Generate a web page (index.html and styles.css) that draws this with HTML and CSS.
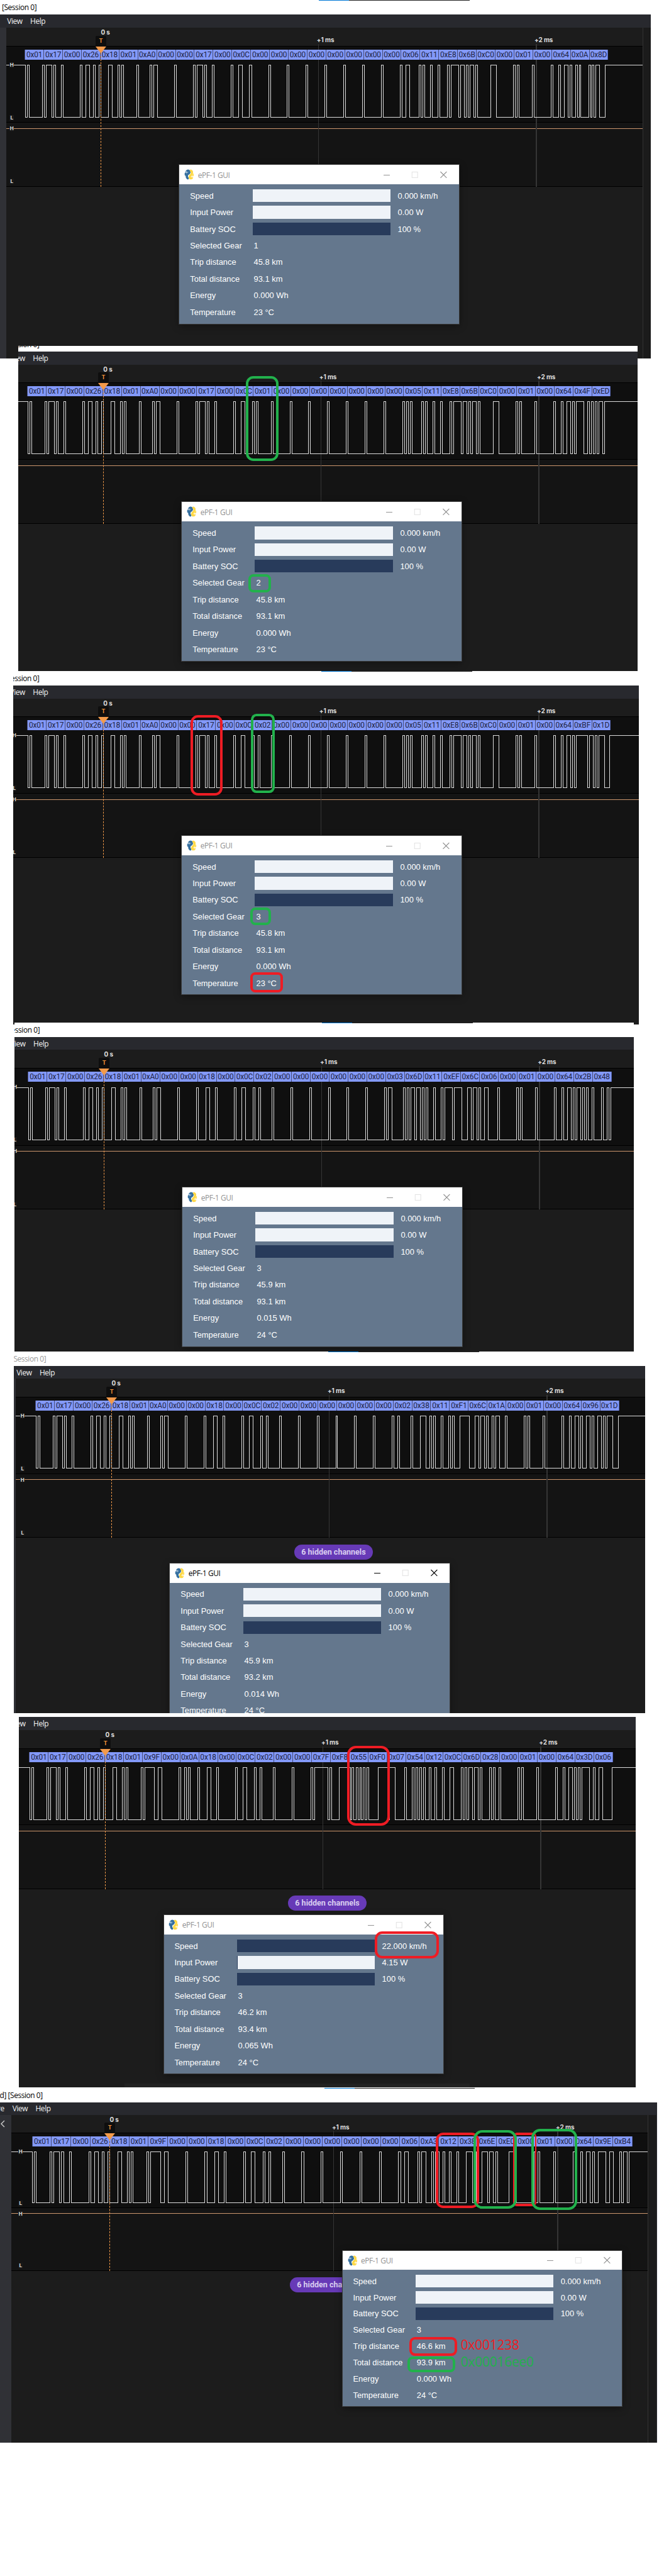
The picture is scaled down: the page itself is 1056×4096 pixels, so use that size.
FILE: index.html
```html
<!DOCTYPE html>
<html lang="en">
<head>
<meta charset="utf-8">
<title>ePF-1 serial captures</title>
<link rel="stylesheet" href="styles.css">
</head>
<body>
<svg class="defs" aria-hidden="true">
  <symbol id="python" viewBox="0 0 16 17">
    <path d="M4 3.6Q5.6 1.6 7.4 2.8Q9 4.4 7.4 6.6Q4.2 8 4.2 10.4Q3.8 13.4 5.6 14.6" fill="none" stroke="#3670a0" stroke-width="3.7" stroke-linecap="round"/>
    <path d="M2.2 6.8V9" stroke="#3670a0" stroke-width="3" stroke-linecap="round"/>
    <path d="M10.6 2.4Q13 3.4 12.2 6.4Q12.2 9 9.4 10.6Q8 13.6 9.6 14.6Q11.6 15 12.4 13.6" fill="none" stroke="#ffd845" stroke-width="3.5" stroke-linecap="round"/>
    <path d="M13.9 8V10" stroke="#ffe063" stroke-width="2.6" stroke-linecap="round"/>
    <circle cx="3.6" cy="4.2" r=".8" fill="#fff"/><circle cx="12.6" cy="13" r=".7" fill="#fff"/>
  </symbol>
  <symbol id="buttons" viewBox="0 0 102 12">
    <path d="M0 6.5H10" stroke="currentColor"/>
    <rect class="max" x="45.5" y="1.5" width="9" height="9" fill="none"/>
    <path d="M91 1L101 11M101 1L91 11" stroke="currentColor" stroke-width="1.1"/>
  </symbol>
</svg>
<main class="page">

<section class="capture c1">
  <div class="caption"><span>[Session 0]</span></div>
  <div class="app">
    <nav class="menubar"><span>View</span><span>Help</span></nav>
    <div class="body">
      <div class="strip"></div>
      <div class="scope">
        <div class="ruler"></div>
        <div class="digital" data-bytes="01 17 00 26 18 01 A0 00 00 17 00 0C 00 00 00 00 00 00 00 00 06 11 E8 6B C0 00 01 00 64 0A 8D"></div>
        <div class="analog"></div>
      </div>
      <div class="side"></div>
    </div>
    <div class="window">
      <header><svg class="logo"><use href="#python"/></svg>ePF-1 GUI<svg class="buttons"><use href="#buttons"/></svg></header>
      <div class="rows">
        <div class="row"><span>Speed</span><i class="bar"></i><b>0.000 km/h</b></div>
        <div class="row"><span>Input Power</span><i class="bar"></i><b>0.00 W</b></div>
        <div class="row"><span>Battery SOC</span><i class="bar full"></i><b>100 %</b></div>
        <div class="row"><span>Selected Gear</span><b>1</b></div>
        <div class="row"><span>Trip distance</span><b>45.8 km</b></div>
        <div class="row"><span>Total distance</span><b>93.1 km</b></div>
        <div class="row"><span>Energy</span><b>0.000 Wh</b></div>
        <div class="row"><span>Temperature</span><b>23 °C</b></div>
      </div>
    </div>
  </div>
</section>

<section class="capture c2">
  <div class="caption"><span>[Session 0]</span></div>
  <div class="app">
    <nav class="menubar"><span>View</span><span>Help</span></nav>
    <div class="body">
      <div class="scope">
        <div class="ruler"></div>
        <div class="digital" data-bytes="01 17 00 26 18 01 A0 00 00 17 00 0C 01 00 00 00 00 00 00 00 05 11 E8 6B C0 00 01 00 64 4F ED"></div>
        <div class="analog"></div>
      </div>
    </div>
    <div class="window">
      <header><svg class="logo"><use href="#python"/></svg>ePF-1 GUI<svg class="buttons"><use href="#buttons"/></svg></header>
      <div class="rows">
        <div class="row"><span>Speed</span><i class="bar"></i><b>0.000 km/h</b></div>
        <div class="row"><span>Input Power</span><i class="bar"></i><b>0.00 W</b></div>
        <div class="row"><span>Battery SOC</span><i class="bar full"></i><b>100 %</b></div>
        <div class="row"><span>Selected Gear</span><b>2</b></div>
        <div class="row"><span>Trip distance</span><b>45.8 km</b></div>
        <div class="row"><span>Total distance</span><b>93.1 km</b></div>
        <div class="row"><span>Energy</span><b>0.000 Wh</b></div>
        <div class="row"><span>Temperature</span><b>23 °C</b></div>
      </div>
    </div>
    <div class="mark green m2-byte"></div>
    <div class="mark green m2-gear"></div>
  </div>
</section>

<section class="capture c3">
  <div class="caption"><span>[Session 0]</span></div>
  <div class="app">
    <nav class="menubar"><span>View</span><span>Help</span></nav>
    <div class="body">
      <div class="scope">
        <div class="ruler"></div>
        <div class="digital" data-bytes="01 17 00 26 18 01 A0 00 00 17 00 0C 02 00 00 00 00 00 00 00 05 11 E8 6B C0 00 01 00 64 BF 1D"></div>
        <div class="analog"></div>
      </div>
    </div>
    <div class="window">
      <header><svg class="logo"><use href="#python"/></svg>ePF-1 GUI<svg class="buttons"><use href="#buttons"/></svg></header>
      <div class="rows">
        <div class="row"><span>Speed</span><i class="bar"></i><b>0.000 km/h</b></div>
        <div class="row"><span>Input Power</span><i class="bar"></i><b>0.00 W</b></div>
        <div class="row"><span>Battery SOC</span><i class="bar full"></i><b>100 %</b></div>
        <div class="row"><span>Selected Gear</span><b>3</b></div>
        <div class="row"><span>Trip distance</span><b>45.8 km</b></div>
        <div class="row"><span>Total distance</span><b>93.1 km</b></div>
        <div class="row"><span>Energy</span><b>0.000 Wh</b></div>
        <div class="row"><span>Temperature</span><b>23 °C</b></div>
      </div>
    </div>
    <div class="mark red m3-temp-byte"></div>
    <div class="mark green m3-gear-byte"></div>
    <div class="mark green m3-gear"></div>
    <div class="mark red m3-temp"></div>
  </div>
</section>

<section class="capture c4">
  <div class="caption"><span>[Session 0]</span></div>
  <div class="app">
    <nav class="menubar"><span>View</span><span>Help</span></nav>
    <div class="body">
      <div class="scope">
        <div class="ruler"></div>
        <div class="digital" data-bytes="01 17 00 26 18 01 A0 00 00 18 00 0C 02 00 00 00 00 00 00 03 6D 11 EF 6C 06 00 01 00 64 2B 48"></div>
        <div class="analog"></div>
      </div>
    </div>
    <div class="window">
      <header><svg class="logo"><use href="#python"/></svg>ePF-1 GUI<svg class="buttons"><use href="#buttons"/></svg></header>
      <div class="rows">
        <div class="row"><span>Speed</span><i class="bar"></i><b>0.000 km/h</b></div>
        <div class="row"><span>Input Power</span><i class="bar"></i><b>0.00 W</b></div>
        <div class="row"><span>Battery SOC</span><i class="bar full"></i><b>100 %</b></div>
        <div class="row"><span>Selected Gear</span><b>3</b></div>
        <div class="row"><span>Trip distance</span><b>45.9 km</b></div>
        <div class="row"><span>Total distance</span><b>93.1 km</b></div>
        <div class="row"><span>Energy</span><b>0.015 Wh</b></div>
        <div class="row"><span>Temperature</span><b>24 °C</b></div>
      </div>
    </div>
  </div>
</section>

<section class="capture c5">
  <div class="caption inactive"><span>[Session 0]</span></div>
  <div class="app">
    <nav class="menubar"><span>View</span><span>Help</span></nav>
    <div class="body">
      <div class="strip"></div>
      <div class="scope">
        <div class="ruler"></div>
        <div class="digital" data-bytes="01 17 00 26 18 01 A0 00 00 18 00 0C 02 00 00 00 00 00 00 02 38 11 F1 6C 1A 00 01 00 64 96 1D"></div>
        <div class="analog"></div>
        <div class="badge">6 hidden channels</div>
      </div>
    </div>
    <div class="window active">
      <header><svg class="logo"><use href="#python"/></svg>ePF-1 GUI<svg class="buttons"><use href="#buttons"/></svg></header>
      <div class="rows">
        <div class="row"><span>Speed</span><i class="bar"></i><b>0.000 km/h</b></div>
        <div class="row"><span>Input Power</span><i class="bar"></i><b>0.00 W</b></div>
        <div class="row"><span>Battery SOC</span><i class="bar full"></i><b>100 %</b></div>
        <div class="row"><span>Selected Gear</span><b>3</b></div>
        <div class="row"><span>Trip distance</span><b>45.9 km</b></div>
        <div class="row"><span>Total distance</span><b>93.2 km</b></div>
        <div class="row"><span>Energy</span><b>0.014 Wh</b></div>
        <div class="row"><span>Temperature</span><b>24 °C</b></div>
      </div>
    </div>
  </div>
</section>

<section class="capture c6">
  <div class="app">
    <nav class="menubar"><span>View</span><span>Help</span></nav>
    <div class="body">
      <div class="scope">
        <div class="ruler"></div>
        <div class="digital" data-bytes="01 17 00 26 18 01 9F 00 0A 18 00 0C 02 00 00 7F F8 55 F0 07 54 12 0C 6D 28 00 01 00 64 3D 06"></div>
        <div class="analog"></div>
        <div class="badge">6 hidden channels</div>
      </div>
    </div>
    <div class="window">
      <header><svg class="logo"><use href="#python"/></svg>ePF-1 GUI<svg class="buttons"><use href="#buttons"/></svg></header>
      <div class="rows">
        <div class="row"><span>Speed</span><i class="bar full"></i><b>22.000 km/h</b></div>
        <div class="row"><span>Input Power</span><i class="bar low"></i><b>4.15 W</b></div>
        <div class="row"><span>Battery SOC</span><i class="bar full"></i><b>100 %</b></div>
        <div class="row"><span>Selected Gear</span><b>3</b></div>
        <div class="row"><span>Trip distance</span><b>46.2 km</b></div>
        <div class="row"><span>Total distance</span><b>93.4 km</b></div>
        <div class="row"><span>Energy</span><b>0.065 Wh</b></div>
        <div class="row"><span>Temperature</span><b>24 °C</b></div>
      </div>
    </div>
    <div class="peek"></div>
    <div class="mark red m6-bytes"></div>
    <div class="mark red m6-speed"></div>
  </div>
</section>

<section class="capture c7">
  <div class="caption"><span><em>d] </em>[Session 0]</span></div>
  <div class="app">
    <nav class="menubar"><span><em>re</em>View</span><span>Help</span></nav>
    <div class="body">
      <div class="strip"><svg viewBox="0 0 8 12"><path d="M7 1L2 6L7 11" fill="none" stroke="#ccc" stroke-width="1.4"/></svg></div>
      <div class="scope">
        <div class="ruler"></div>
        <div class="digital" data-bytes="01 17 00 26 18 01 9F 00 00 18 00 0C 02 00 00 00 00 00 00 06 A3 12 38 6E E0 00 01 00 64 9E B4"></div>
        <div class="analog"></div>
        <div class="badge">6 hidden channels</div>
      </div>
      <div class="side"></div>
    </div>
    <div class="window">
      <header><svg class="logo"><use href="#python"/></svg>ePF-1 GUI<svg class="buttons"><use href="#buttons"/></svg></header>
      <div class="rows">
        <div class="row"><span>Speed</span><i class="bar"></i><b>0.000 km/h</b></div>
        <div class="row"><span>Input Power</span><i class="bar"></i><b>0.00 W</b></div>
        <div class="row"><span>Battery SOC</span><i class="bar full"></i><b>100 %</b></div>
        <div class="row"><span>Selected Gear</span><b>3</b></div>
        <div class="row"><span>Trip distance</span><b>46.6 km</b></div>
        <div class="row"><span>Total distance</span><b>93.9 km</b></div>
        <div class="row"><span>Energy</span><b>0.000 Wh</b></div>
        <div class="row"><span>Temperature</span><b>24 °C</b></div>
      </div>
    </div>
    <div class="mark red m7-trip-bytes"></div>
    <div class="mark red m7-trip-high"></div>
    <div class="mark green m7-total-bytes"></div>
    <div class="mark green m7-total-high"></div>
    <div class="mark red m7-trip"></div>
    <div class="mark green m7-total"></div>
    <div class="note red-note">0x001238</div>
    <div class="note green-note">0x00016ee0</div>
  </div>
</section>

</main>
<script src="scope.js"></script>
</body>
</html>
```

FILE: styles.css
```css
* { box-sizing: border-box; }
body { margin: 0; width: 1056px; height: 4096px; overflow: hidden; background: #fff; }
.defs { position: absolute; width: 0; height: 0; }
.page { width: 1062px; height: 4119px; zoom: 0.99434; overflow: hidden; }

/* One screen capture: caption strip, application, floating window.
   --x: left edge, --w: width, --shift: origin of the captured screen */
.capture {
  --ruler: 29.5px; --ch1: 123px; --ch2: 102px; --wave: 84px;
  --ms: 348.2px; --lead: 121.8px; --bytes: 933.5px; --pitch: 26.6px;
  position: relative; margin-left: var(--x); width: var(--w);
}
.c1 { --x: 0px; --w: 1041px; --h: 550px; --shift: 0px; --trig: 151.3px; --ruler: 30px; --ch1: 122.5px; --wx: 287px; --wy: 240.7px; }
.c2 { --x: 29px; --w: 990.5px; --h: 511px; --shift: 4.3px; --trig: 136.3px; --wx: 262px; --wy: 241px; margin-top: -20px; }
.c3 { --x: 21px; --w: 1001px; --h: 542px; --shift: 4.3px; --trig: 144.3px; --wx: 270px; --wy: 240.7px; }
.c4 { --x: 23px; --w: 991px; --h: 503px; --shift: 5px; --trig: 143.5px; --ruler: 30px; --wx: 269px; --wy: 241px; margin-top: -3px; }
.c5 { --x: 22px; --w: 1010px; --h: 556px; --shift: 15px; --trig: 153.5px; --wx: 250px; --wy: 316px; --badge: 446px; }
.c6 { --x: 30px; --w: 987px; --h: 592px; --shift: 5px; --trig: 138.5px; --ch1: 122.5px; --wx: 232px; --wy: 316.5px; --badge: 431px; margin-top: 6px; }
.c7 { --x: 0px; --w: 1051px; --h: 544px; --shift: 8.5px; --trig: 157px; --ch1: 119.8px; --ch2: 100px; --wave: 82.2px; --ms: 358.2px; --lead: 124.5px; --bytes: 960.5px; --pitch: 26px; --wx: 547.7px; --wy: 238px; --badge: 445.5px; margin-top: 1px; }

.caption, .menubar, .window header { font-family: "Open Sans", "Noto Sans", sans-serif; font-size: 12px; letter-spacing: -0.42px; white-space: nowrap; }
.caption { position: relative; display: flex; align-items: flex-end; height: 23px; overflow: hidden; background: #fff; color: #000; line-height: 22px; }
.caption::before { content: ""; position: absolute; top: 0; left: calc(510px + var(--shift) - var(--x)); width: 241px; height: 1px; background: linear-gradient(90deg, #0078d7 48px, #222 48px); }
.c2 .caption { height: 9px; }
.c2 .caption::before { display: none; }
.caption span { margin-left: calc(3px + var(--shift) - var(--x)); }
.caption.inactive { color: #999; }
em { font-style: normal; }
.caption em { margin-left: -12px; }

.app { position: relative; display: flex; flex-direction: column; height: var(--h); overflow: hidden; background: #1c1c1c; }
.menubar { flex: none; display: flex; gap: 12.5px; height: 21px; line-height: 21px; padding: 0; background: #28292e; color: #f2f2f2; }
.menubar span:first-child { margin-left: calc(11.3px + var(--shift) - var(--x)); }
.menubar em { display: inline-block; width: 12px; margin-left: -25px; margin-right: 13px; text-align: right; }
.c7 .menubar { height: 20px; line-height: 20px; }
.body { flex: 1; display: flex; min-height: 0; }
.strip { flex: none; width: 10px; background: #303136; }
.c5 .strip { width: 3px; }
.c7 .strip { width: 18.5px; }
.strip svg { display: block; width: 8px; height: 12px; margin: 8px 0 0 0; }
.side { flex: none; width: 13px; border-left: 1px solid #333; background: #1b1b1b; }
.c7 .side { width: 15.5px; border-right: 1px solid #2c2d33; }

.scope { position: relative; flex: 1; overflow: hidden; font-family: Roboto, sans-serif; }
.ruler { height: var(--ruler); border-bottom: 1.5px solid #000; }
.digital { display: flex; flex-direction: column; height: var(--ch1); padding-top: 5px; border-bottom: 1.5px solid #000; background: #0f0f0f; }
.analog { height: var(--ch2); border-bottom: 1.5px solid #000; background: #141414; padding-top: 8.3px; }
.analog::before { content: ""; display: block; border-top: 1.1px solid #cc966d; }

.grid-line { position: absolute; top: calc(var(--ruler) - 4px); width: 1.5px; height: calc(var(--ch1) + var(--ch2) + 4px); background: #353535; }
.at-1 { left: calc(var(--trig) + var(--ms) - 0.8px); }
.at-2 { left: calc(var(--trig) + 2 * var(--ms) - 0.8px); }
.time { position: absolute; top: 14px; font: 700 10px/12px Inter, sans-serif; letter-spacing: -0.1px; color: #dedede; white-space: nowrap; }
.time.at-1, .time.at-2 { margin-left: -2px; }
.time.at-0 { top: 2px; left: var(--trig); }

.frames { position: relative; z-index: 1; flex: none; display: grid; grid-template-columns: repeat(31, 1fr); width: var(--bytes); height: 16.3px; margin-left: calc(var(--trig) - var(--lead)); border-right: 1px solid #5564ad; }
.frames span { border-left: 1px solid #454c78; background: #8399f9; color: #20233f; font-size: 12px; line-height: 16.3px; text-align: center; letter-spacing: -0.15px; }
.wave { position: relative; z-index: 1; flex: none; display: block; width: 100%; height: var(--wave); margin-top: 8.2px; overflow: visible; }
.wave path { fill: none; stroke: #dcdcdc; stroke-width: 1; vector-effect: non-scaling-stroke; shape-rendering: crispEdges; }

.trigger { position: absolute; z-index: 2; top: calc(var(--ruler) - 17px); left: calc(var(--trig) - 8.3px); width: 17px; }
.trigger span { display: block; height: 17px; border-radius: 2px 2px 0 0; background: #0e0e0e; color: #f29339; font: 700 9px/17px Inter, sans-serif; text-align: center; }
.trigger svg { display: block; width: 17px; height: 11px; }
.trigger-line { position: absolute; z-index: 1; top: var(--ruler); left: calc(var(--trig) - 0.5px); width: 0; height: calc(var(--ch1) + var(--ch2)); border-left: 1.1px dashed #ee9748; }
.level { position: absolute; z-index: 2; left: calc(var(--trig) - 146px); width: 7px; height: 9px; background: #191919; color: #e2e2e2; font: 700 8px/9px Inter, sans-serif; text-align: center; }
.level.h1 { top: calc(var(--ruler) + 25.2px); }
.level.l1 { top: calc(var(--ruler) + var(--wave) + 25.8px); }
.level.h2 { top: calc(var(--ruler) + var(--ch1) + 4.5px); }
.level.l2 { top: calc(var(--ruler) + var(--ch1) + var(--ch2) - 12.5px); }

.badge { width: 125px; height: 24px; margin: 10.5px 0 0 var(--badge); border-radius: 12px; background: #673ab7; color: #d9cdf0; font-weight: 700; font-size: 12.6px; line-height: 24px; text-align: center; white-space: nowrap; }
.peek { position: absolute; left: 169px; bottom: 0; width: 552px; height: 6px; background: #222; }

.window { position: absolute; z-index: 3; left: var(--wx); top: var(--wy); width: 446.8px; height: 253.8px; outline: 1px solid #383838; background: #64778d; box-shadow: 0 3px 12px rgba(0, 0, 0, .4); color: #fff; font-family: "Liberation Sans", Arial, sans-serif; font-size: 13px; }
.c7 .window { height: 248px; }
.window header { display: flex; align-items: center; height: 31px; padding: 0 18px 0 8px; background: #fff; color: #929292; }
.c7 .window header { height: 30px; }
.window.active header { color: #000; }
.logo { width: 16px; height: 17px; margin-right: 5.5px; }
.buttons { width: 102px; height: 12px; margin-left: auto; }
.max { stroke: #e2e2e2; }
.active .max { stroke: #ccc; }
.rows { padding-top: 5px; }
.row { display: grid; grid-template-columns: 99.8px auto 1fr; align-items: center; height: var(--pitch); padding-left: 17px; white-space: nowrap; }
.row b { font-weight: 400; padding-left: 2px; }
.bar { width: 220.3px; height: 20.4px; background: #eff3f8; }
.bar + b { padding-left: 12px; }
.bar.full { background: #283b5b; }
.bar.low { border-left: 1px solid #283b5b; }

/* Hand-drawn highlights over the captures */
.mark { position: absolute; z-index: 4; border: 5px solid; border-radius: 12px; }
.red { border-color: #ee1c24; }
.green { border-color: #22b14c; }
.m2-byte { left: 364px; top: 39px; width: 52.5px; height: 136px; }
.m2-gear { left: 368px; top: 356px; width: 36.5px; height: 29px; border-radius: 8px; }
.m3-temp-byte { left: 284px; top: 48px; width: 51px; height: 128px; }
.m3-gear-byte { left: 380px; top: 46px; width: 39px; height: 126px; border-radius: 9px; }
.m3-gear { left: 379px; top: 355px; width: 33px; height: 28.5px; border-radius: 8px; }
.m3-temp { left: 379px; top: 458.6px; width: 53px; height: 32.4px; border-radius: 8px; }
.m6-bytes { left: 525px; top: 46px; width: 69px; height: 127.5px; border-radius: 14px; }
.m6-speed { left: 569px; top: 343px; width: 103px; height: 42.5px; }
.m7-trip-bytes { left: 697px; top: 48.7px; width: 69px; height: 120.6px; }
.m7-trip-high { left: 821px; top: 48px; width: 36.7px; height: 118px; border-right-width: 3px; border-radius: 6px; }
.m7-total-bytes { left: 757px; top: 44px; width: 70px; height: 126px; border-radius: 14px; }
.m7-total-high { left: 850px; top: 42px; width: 73px; height: 130px; border-radius: 14px; }
.m7-trip { left: 655px; top: 375px; width: 76px; height: 30.5px; border-radius: 9px; }
.m7-total { left: 652px; top: 406px; width: 76px; height: 25.7px; border-radius: 8px; }
.note { position: absolute; z-index: 4; left: 737px; font: 21px/26px "Open Sans", "Noto Sans", sans-serif; letter-spacing: -0.2px; white-space: nowrap; }
.red-note { top: 375.5px; color: #ee1c24; }
.green-note { top: 402.5px; color: #22b14c; }
```

FILE: scope.js
```js
// Draws the decoded byte boxes, the 8N1 waveform and the time markers of each scope.
document.querySelectorAll('.digital').forEach(function (channel) {
  var scope = channel.parentNode;
  var css = getComputedStyle(scope);
  var px = function (name) { return parseFloat(css.getPropertyValue(name)); };
  var bytes = channel.dataset.bytes.split(' ');
  var start = px('--trig') - px('--lead') + 1.4;
  var frame = px('--bytes') / 31;
  var bit = frame / 10;

  var frames = '<div class="frames">' + bytes.map(function (b) {
    return '<span>0x' + b + '</span>';
  }).join('') + '</div>';

  // Start bit low, eight data bits LSB first, stop bit high.
  var level = 1;
  var d = 'M0 0';
  bytes.forEach(function (hex, i) {
    var bits = [0];
    for (var k = 0; k < 8; k++) bits.push(parseInt(hex, 16) >> k & 1);
    bits.push(1);
    bits.forEach(function (v, k) {
      if (v === level) return;
      d += 'H' + (start + i * frame + k * bit).toFixed(1) + 'V' + (v ? 0 : 100);
      level = v;
    });
  });
  d += 'H1100';
  var h = px('--wave');
  channel.innerHTML = frames +
    '<svg class="wave"><path transform="scale(1 ' + h / 100 + ')" d="' + d + '"/></svg>';

  scope.insertAdjacentHTML('beforeend',
    '<div class="grid-line at-1"></div><div class="grid-line at-2"></div>' +
    '<div class="trigger-line"></div>' +
    '<div class="trigger"><span>T</span><svg viewBox="0 0 17 11"><path d="M0 0H17L8.5 11Z" fill="#f39a4a"/></svg></div>' +
    '<div class="time at-0">0 s</div><div class="time at-1">+1 ms</div><div class="time at-2">+2 ms</div>' +
    '<div class="level h1">H</div><div class="level l1">L</div>' +
    '<div class="level h2">H</div><div class="level l2">L</div>');
});
```
